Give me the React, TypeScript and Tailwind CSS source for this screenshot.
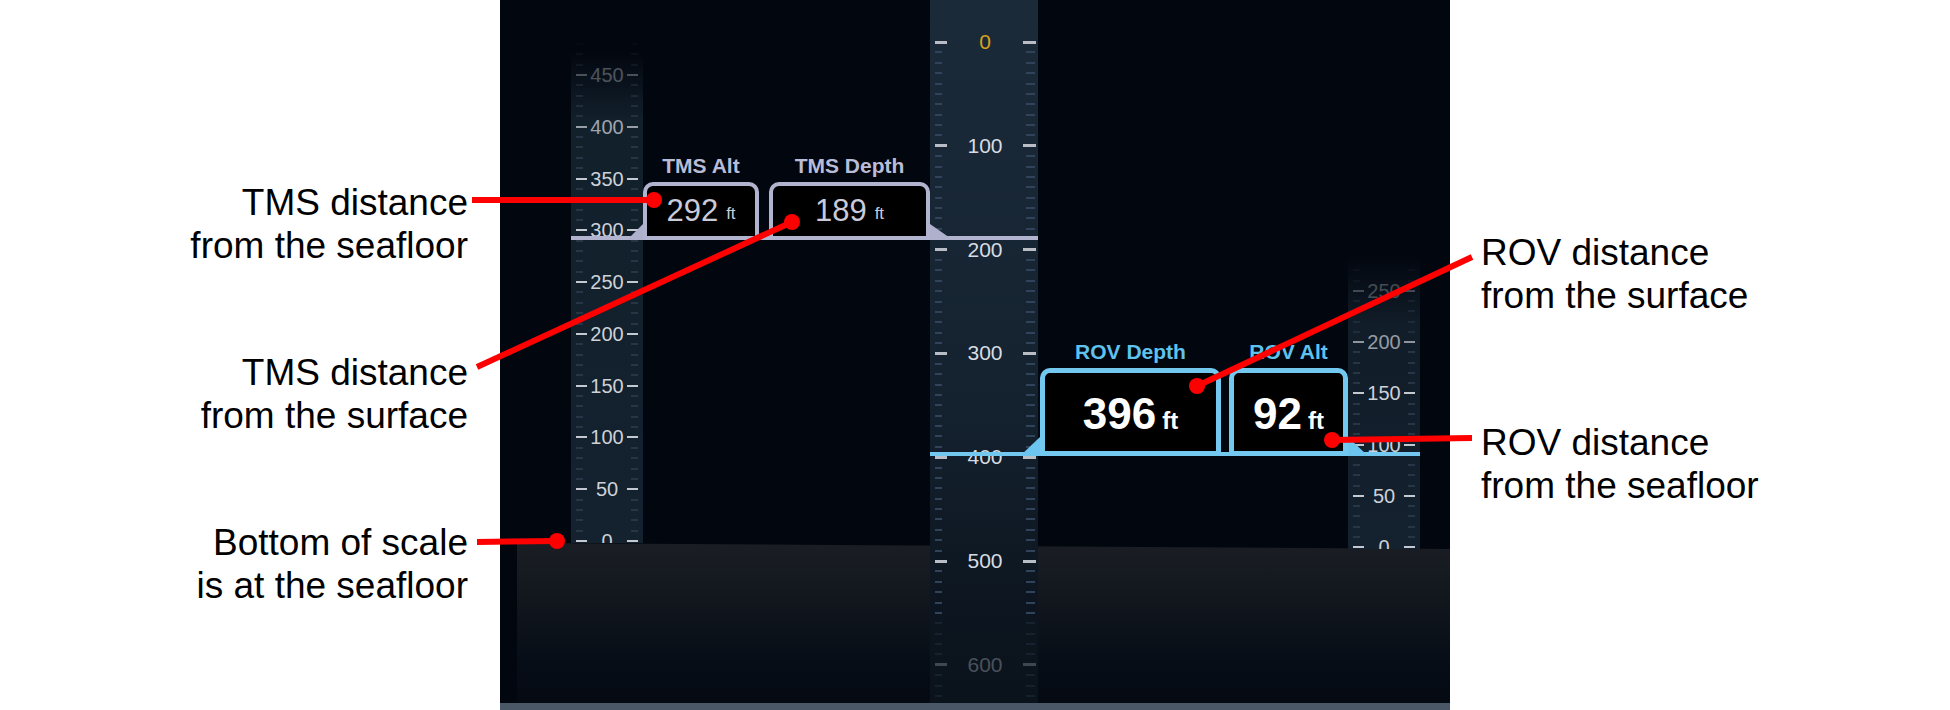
import React from 'react'

// depth gauge geometry (pixels inside the panel)
const CENTER_ZERO = 42
const CENTER_K = 1.038
const LEFT_ZERO = 541
const LEFT_K = 1.0356
const RIGHT_ZERO = 547
const RIGHT_K = 1.025

function SideScale({ height, zero, k, max, dim, bg }: {
  height: number
  zero: number
  k: number
  max: number
  dim: Record<number, number>
  bg: string
}) {
  const values: number[] = []
  for (let v = 0; v <= max; v += 10) values.push(v)
  return (
    <div className={`relative w-[72px] shrink-0 overflow-hidden ${bg}`} style={{ height }}>
      {values.map((v) => {
        const y = zero - v * k
        const op = dim[v] ?? 1
        if (v % 50 === 0) {
          return (
            <div key={v} className="absolute inset-x-0 flex h-[20px] items-center" style={{ top: y - 10, opacity: op }}>
              <div className="ml-[5px] h-[2px] w-[11px] bg-[#c4c8d0]" />
              <div className="flex-1 text-center text-[20px] leading-[20px] text-[#cdd1d8]">{v}</div>
              <div className="mr-[5px] h-[2px] w-[11px] bg-[#c4c8d0]" />
            </div>
          )
        }
        return (
          <React.Fragment key={v}>
            <div className="absolute left-[5px] h-[2px] w-[7px] bg-[#263647]" style={{ top: y - 1, opacity: op }} />
            <div className="absolute right-[5px] h-[2px] w-[7px] bg-[#263647]" style={{ top: y - 1, opacity: op }} />
          </React.Fragment>
        )
      })}
    </div>
  )
}

function CenterScale() {
  const values: number[] = []
  for (let v = 0; v <= 640; v += 10) values.push(v)
  return (
    <div className="relative z-10 h-[703px] w-[108px] shrink-0 overflow-hidden bg-[linear-gradient(to_bottom,#1b2a39_0px,#152331_380px,#0d1620_600px,#0a121b_703px)]">
      {values.map((v) => {
        const y = CENTER_ZERO + v * CENTER_K
        const fade = v >= 560 ? 0.3 : 1
        if (v % 100 === 0) {
          return (
            <div key={v} className="absolute inset-x-0 flex h-[22px] items-center" style={{ top: y - 11, opacity: fade }}>
              <div className="ml-[5px] h-[3px] w-[12px] bg-[#b9bdc5]" />
              <div className={`flex-1 text-center text-[21px] leading-[22px] ${v === 0 ? 'text-[#d9a21c]' : 'text-[#d8dce2]'}`}>{v}</div>
              <div className="mr-[2px] h-[3px] w-[13px] bg-[#b9bdc5]" />
            </div>
          )
        }
        return (
          <React.Fragment key={v}>
            <div className="absolute left-[5px] h-[2px] w-[7px] bg-[#31435a]" style={{ top: y - 1, opacity: fade }} />
            <div className="absolute right-[3px] h-[2px] w-[9px] bg-[#31435a]" style={{ top: y - 1, opacity: fade }} />
          </React.Fragment>
        )
      })}
    </div>
  )
}

function Flare({ w, h, side, color }: { w: number; h: number; side: 'left' | 'right'; color: string }) {
  return (
    <div
      className={`shrink-0 ${color} ${side === 'left' ? '[clip-path:polygon(100%_0,100%_100%,0_100%)]' : '[clip-path:polygon(0_0,100%_100%,0_100%)]'}`}
      style={{ width: w, height: h }}
    />
  )
}

function TmsBox({ label, value, width }: { label: string; value: number; width: number }) {
  return (
    <div className="relative h-[58px] shrink-0 rounded-t-[10px] border-[4px] border-[#b2b4cf] bg-black" style={{ width }}>
      <div className="absolute bottom-full left-0 right-0 mb-[9px] whitespace-nowrap text-center text-[21px] font-bold leading-[22px] text-[#b9bcd6]">
        {label}
      </div>
      <div className="flex h-full items-center justify-center pb-[2px] text-[#c9cbd9]">
        <span className="text-[31px] leading-none">{value}</span>
        <span className="ml-[8px] mt-[6px] text-[17px] leading-none">ft</span>
      </div>
    </div>
  )
}

function RovBox({ label, value, width }: { label: string; value: number; width: number }) {
  return (
    <div className="relative h-[88px] shrink-0 rounded-t-[10px] border-[5px] border-[#72c8ef] bg-black" style={{ width }}>
      <div className="absolute bottom-full left-0 right-0 mb-[10px] whitespace-nowrap text-center text-[21px] font-bold leading-[22px] text-[#5fc2ee]">
        {label}
      </div>
      <div className="flex h-full items-baseline justify-center pt-[19px] font-bold text-white">
        <span className="text-[44px] leading-none">{value}</span>
        <span className="ml-[6px] text-[24px] leading-none">ft</span>
      </div>
    </div>
  )
}

function Gauge() {
  return (
    <div className="relative h-[710px] w-[950px] shrink-0 overflow-hidden bg-[#02060e]">
      {/* seafloor */}
      <div className="absolute left-[17px] right-0 top-[543px] h-[160px] bg-[linear-gradient(to_bottom,#1a1e24_0%,#12171e_35%,#070d16_75%,#040912_100%)] [clip-path:polygon(0_0,100%_6px,100%_100%,0_100%)]" />
      <div className="absolute inset-x-0 bottom-0 h-[7px] bg-[#4a5767]" />

      <div className="flex items-start pl-[71px]">
        <SideScale
          height={543}
          zero={LEFT_ZERO}
          k={LEFT_K}
          max={480}
          dim={{ 450: 0.35, 460: 0.3, 470: 0.2, 480: 0.1, 440: 0.5, 430: 0.6, 420: 0.7, 410: 0.8, 400: 0.75 }}
          bg="bg-[linear-gradient(to_bottom,#02060e_50px,#12202c_120px,#14212e_100%)]"
        />
        <div className="w-[287px] shrink-0" />
        <CenterScale />
        <div className="w-[310px] shrink-0" />
        <SideScale
          height={549}
          zero={RIGHT_ZERO}
          k={RIGHT_K}
          max={270}
          dim={{ 270: 0.15, 260: 0.2, 250: 0.3, 240: 0.4, 230: 0.5, 220: 0.6, 210: 0.65, 200: 0.7 }}
          bg="bg-[linear-gradient(to_bottom,#02060e_255px,#111d29_325px,#14212e_100%)]"
        />
      </div>

      {/* TMS marker */}
      <div className="absolute left-[71px] top-[236px] z-20 h-[4px] w-[467px] bg-[#b2b4cf]" />
      <div className="absolute left-[127px] top-[182px] z-20 flex items-end">
        <Flare w={16} h={16} side="left" color="bg-[#aeb0cc]" />
        <TmsBox label="TMS Alt" value={292} width={116} />
        <div className="w-[10px] shrink-0" />
        <TmsBox label="TMS Depth" value={189} width={161} />
        <Flare w={23} h={16} side="right" color="bg-[#aeb0cc]" />
      </div>

      {/* ROV marker */}
      <div className="absolute left-[430px] top-[452px] z-20 h-[4px] w-[490px] bg-[#72c8ef]" />
      <div className="absolute left-[520px] top-[368px] z-20 flex items-end">
        <Flare w={20} h={19} side="left" color="bg-[#6cc5ee]" />
        <RovBox label="ROV Depth" value={396} width={181} />
        <div className="w-[8px] shrink-0" />
        <RovBox label="ROV Alt" value={92} width={119} />
        <Flare w={20} h={19} side="right" color="bg-[#6cc5ee]" />
      </div>
    </div>
  )
}

function Note({ lines }: { lines: string[] }) {
  return (
    <div className="text-[37px] leading-[43px] text-black">
      {lines.map((l) => (
        <div key={l} className="whitespace-nowrap">{l}</div>
      ))}
    </div>
  )
}

export default function App() {
  return (
    <div className="relative flex h-[710px] w-[1950px] overflow-hidden bg-white [font-family:'Liberation_Sans',Arial,sans-serif]">
      <div className="flex w-[500px] shrink-0 flex-col items-end gap-[84px] pr-[32px] pt-[181px] text-right">
        <Note lines={['TMS distance', 'from the seafloor']} />
        <Note lines={['TMS distance', 'from the surface']} />
        <Note lines={['Bottom of scale', 'is at the seafloor']} />
      </div>

      <Gauge />

      <div className="flex w-[500px] shrink-0 flex-col gap-[104px] pl-[31px] pt-[231px]">
        <Note lines={['ROV distance', 'from the surface']} />
        <Note lines={['ROV distance', 'from the seafloor']} />
      </div>

      {/* callout leaders */}
      <svg className="pointer-events-none absolute inset-0 z-30" width="1950" height="710">
        <g stroke="#ff0000" strokeWidth="6" fill="#ff0000">
          <line x1="472" y1="200" x2="654" y2="200" />
          <circle cx="654" cy="200" r="8" stroke="none" />
          <line x1="477" y1="367" x2="792" y2="222" />
          <circle cx="792" cy="222" r="8" stroke="none" />
          <line x1="477" y1="542" x2="557" y2="541" />
          <circle cx="557" cy="541" r="8" stroke="none" />
          <line x1="1472" y1="257" x2="1197" y2="386" />
          <circle cx="1197" cy="386" r="8" stroke="none" />
          <line x1="1472" y1="438" x2="1332" y2="440" />
          <circle cx="1332" cy="440" r="8" stroke="none" />
        </g>
      </svg>
    </div>
  )
}
